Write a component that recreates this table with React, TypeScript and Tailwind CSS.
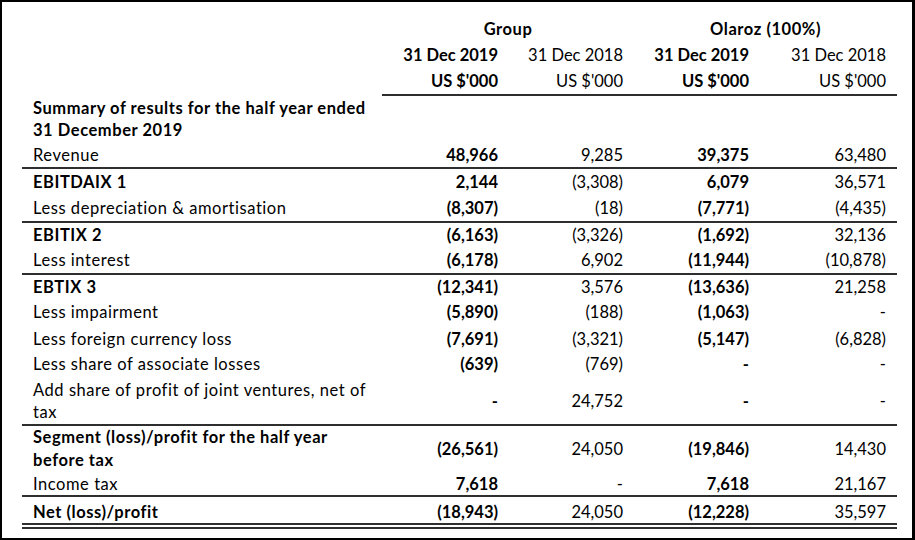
import React from 'react';

type Row = {
    label: string[];
    values: string[];
    size: string;
    bold?: boolean;
    line?: 'single' | 'double';
};

// size = row height + top padding, tuned to the printed statement
const rows: Row[] = [
    { label: ['Summary of results for the half year ended', '31 December 2019'], values: ['', '', '', ''], bold: true, size: 'h-[45px] pt-[1px]' },
    { label: ['Revenue'], values: ['48,966', '9,285', '39,375', '63,480'], size: 'h-[26px] pt-[3px]', line: 'single' },
    { label: ['EBITDAIX 1'], values: ['2,144', '(3,308)', '6,079', '36,571'], bold: true, size: 'h-[26px] pt-[2px]' },
    { label: ['Less depreciation & amortisation'], values: ['(8,307)', '(18)', '(7,771)', '(4,435)'], size: 'h-[26px] pt-[2px]', line: 'single' },
    { label: ['EBITIX 2'], values: ['(6,163)', '(3,326)', '(1,692)', '32,136'], bold: true, size: 'h-[25px] pt-[1px]' },
    { label: ['Less interest'], values: ['(6,178)', '6,902', '(11,944)', '(10,878)'], size: 'h-[25px] pt-[1px]', line: 'single' },
    { label: ['EBTIX 3'], values: ['(12,341)', '3,576', '(13,636)', '21,258'], bold: true, size: 'h-[25px] pt-[1px]' },
    { label: ['Less impairment'], values: ['(5,890)', '(188)', '(1,063)', '-'], size: 'h-[26px] pt-[1px]' },
    { label: ['Less foreign currency loss'], values: ['(7,691)', '(3,321)', '(5,147)', '(6,828)'], size: 'h-[26px] pt-[2px]' },
    { label: ['Less share of associate losses'], values: ['(639)', '(769)', '-', '-'], size: 'h-[26px] pt-[1px]' },
    { label: ['Add share of profit of joint ventures, net of', 'tax'], values: ['-', '24,752', '-', '-'], size: 'h-[46px]', line: 'single' },
    { label: ['Segment (loss)/profit for the half year', 'before tax'], values: ['(26,561)', '24,050', '(19,846)', '14,430'], bold: true, size: 'h-[46px] leading-[23px]' },
    { label: ['Income tax'], values: ['7,618', '-', '7,618', '21,167'], size: 'h-[23px] pt-[1px]', line: 'single' },
    { label: ['Net (loss)/profit'], values: ['(18,943)', '24,050', '(12,228)', '35,597'], bold: true, size: 'h-[26px] pt-[4px]', line: 'double' },
];

const grid = 'grid grid-cols-[360px_127px_125px_126px_137px]';

function Cell({ text, bold }: { text: string; bold: boolean }) {
    return (
        <div className={`text-right pr-[11px] whitespace-nowrap tracking-normal ${bold ? 'font-bold' : ''}`}>
            {text}
        </div>
    );
}

function DataRow({ row }: { row: Row }) {
    const twoLines = row.label.length > 1;
    return (
        <>
            <div className={`${grid} ${row.size} ${twoLines ? 'items-center' : 'items-start'}`}>
                <div className={`pl-[11px] whitespace-nowrap ${row.bold ? 'font-bold' : ''}`}>
                    {row.label.map((l, i) => (
                        <div key={i}>{l}</div>
                    ))}
                </div>
                {row.values.map((v, i) => (
                    <Cell key={i} text={v} bold={i === 0 || i === 2} />
                ))}
            </div>
            {row.line === 'single' && <div className="h-[2px] bg-[#2e2e2e]" />}
            {row.line === 'double' && (
                <div className="flex flex-col gap-[2px]">
                    <div className="h-[2px] bg-[#2e2e2e]" />
                    <div className="h-[2px] bg-[#2e2e2e]" />
                </div>
            )}
        </>
    );
}

export default function App() {
    return (
        <div
            className="w-[915px] h-[540px] overflow-hidden bg-white border-t-2 border-l-2 border-r-[3px] border-b-2 border-black text-black text-[16.5px] leading-[22px] tracking-[0.55px]"
            style={{ fontFamily: 'Lato, "Noto Sans", sans-serif' }}
        >
            <div className="pl-[20px] pt-[16px] w-[895px]">
                <div className={`${grid} h-[26px] items-start font-bold`}>
                    <div />
                    <div className="col-span-2 text-center">Group</div>
                    <div className="col-span-2 text-center">Olaroz (100%)</div>
                </div>
                <div className={`${grid} h-[26px] items-start`}>
                    <div />
                    <Cell text="31 Dec 2019" bold />
                    <Cell text="31 Dec 2018" bold={false} />
                    <Cell text="31 Dec 2019" bold />
                    <Cell text="31 Dec 2018" bold={false} />
                </div>
                <div className={`${grid} h-[24px] items-start`}>
                    <div />
                    <Cell text="US $'000" bold />
                    <Cell text="US $'000" bold={false} />
                    <Cell text="US $'000" bold />
                    <Cell text="US $'000" bold={false} />
                </div>
                <div className={grid}>
                    <div />
                    <div className="col-span-4 h-[2px] bg-[#2e2e2e]" />
                </div>
                {rows.map((r, i) => (
                    <DataRow key={i} row={r} />
                ))}
            </div>
        </div>
    );
}
